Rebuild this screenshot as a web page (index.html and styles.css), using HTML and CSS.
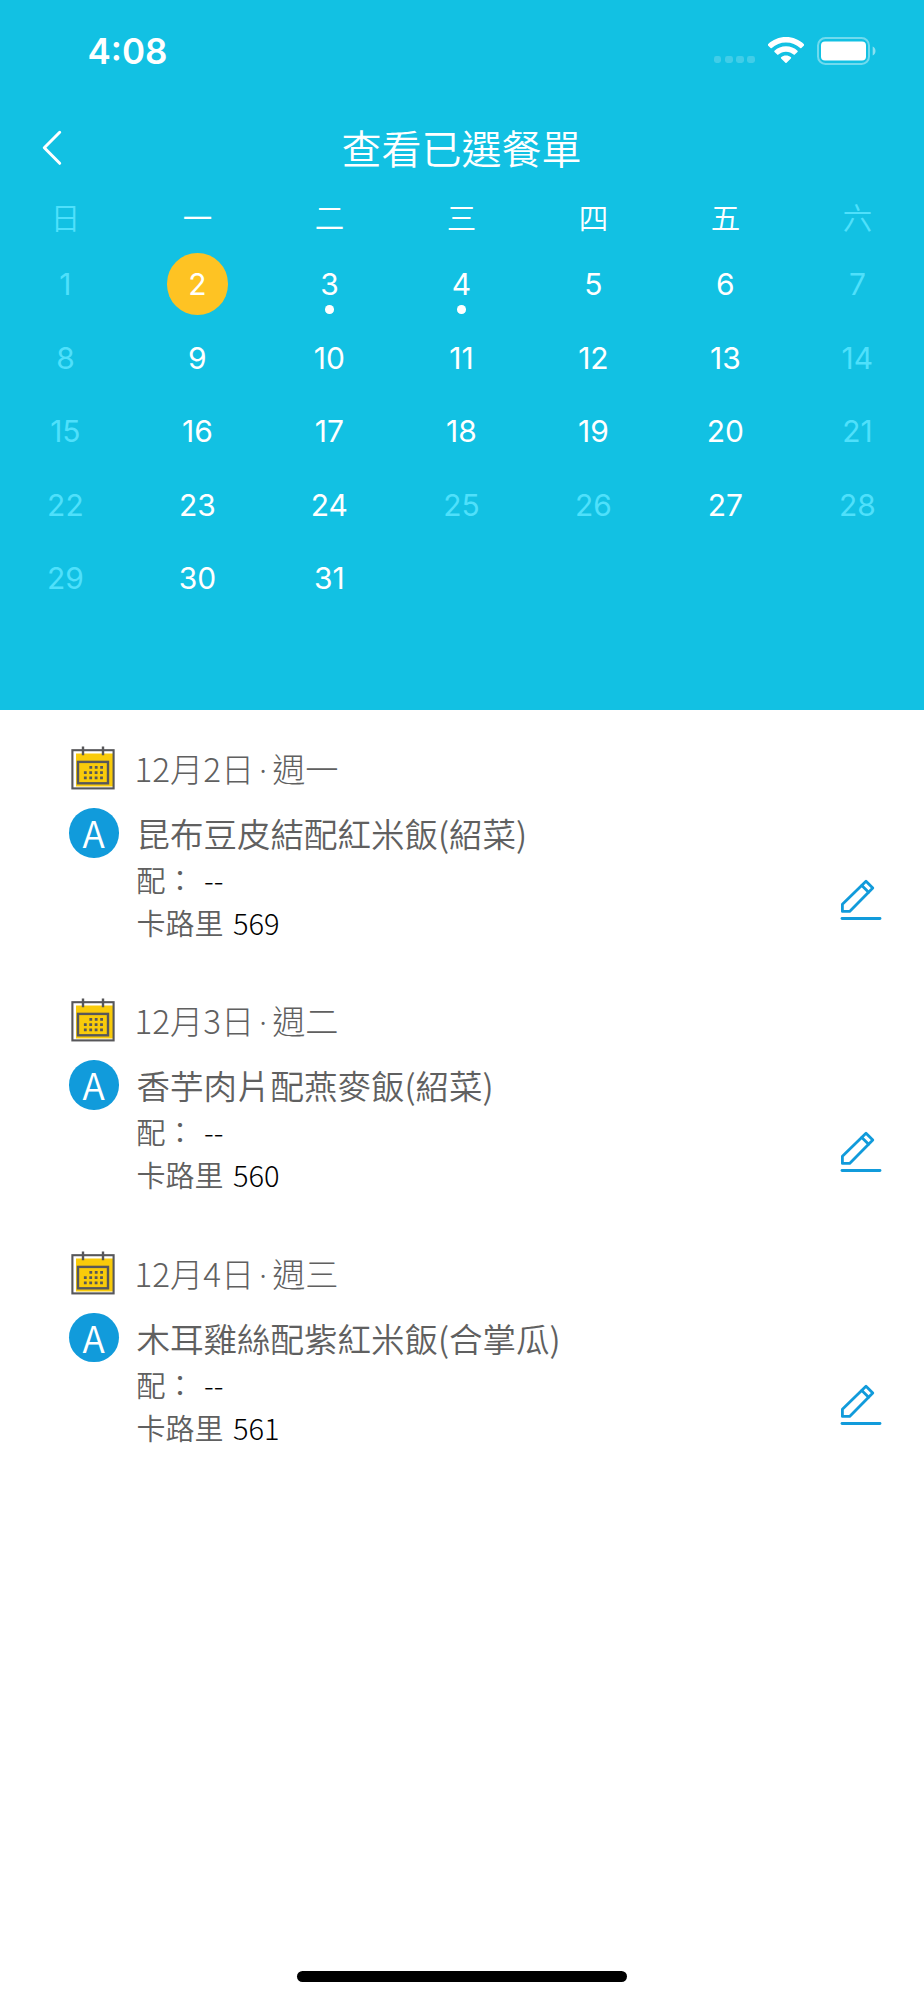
FILE: index.html
```html
<!DOCTYPE html>
<html lang="zh-Hant">
<head>
    <meta charset="UTF-8">
    <title>查看已選餐單</title>
    <link rel="stylesheet" href="styles.css">
</head>
<body>
    <!-- shared icons -->
    <svg class="icon-defs" width="0" height="0">
        <symbol id="icon-calendar" viewBox="0 0 44 44">
            <rect x="5" y="7.5" width="37" height="33" fill="#f9cb0a"/>
            <rect x="1.4" y="4.2" width="41.2" height="38.2" fill="none" stroke="#57575a" stroke-width="2.1"/>
            <path d="M12 0.4v8.8M32 0.4v8.8" stroke="#57575a" stroke-width="2.4"/>
            <rect x="7" y="15.9" width="30" height="21.4" fill="none" stroke="#57575a" stroke-width="2.4"/>
            <path d="M18.4 21.3h14M12.9 26.6h20M12.9 31.8h20" stroke="#57575a" stroke-width="2.8" stroke-dasharray="2.8 2.6"/>
        </symbol>
        <symbol id="icon-edit" viewBox="0 0 42 42">
            <g fill="none" stroke="#119bdb" stroke-width="2.8" stroke-linejoin="round" stroke-linecap="round">
                <path d="M2.4 32.4v-7.2L26 2.2l6.8 6.8L9.6 32.4z"/>
                <path d="M21.8 6.4l6.8 6.8"/>
                <path d="M2 39.5h38"/>
            </g>
        </symbol>
    </svg>

    <header class="header">
        <div class="status-bar">
            <span class="time">4:08</span>
            <div class="status-icons">
                <div class="signal"><i></i><i></i><i></i><i></i></div>
                <svg class="wifi" viewBox="0 0 36 27">
                    <path fill="#fff" d="M18 0C25 0 31.3 2.7 36 7.2c.4.4.4.8 0 1.2l-2.6 2.6c-.4.4-.8.4-1.2 0C28.4 7.5 23.5 5.5 18 5.5S7.6 7.5 3.8 11c-.4.4-.8.4-1.2 0L0 8.4C-.4 8-.4 7.6 0 7.2 4.7 2.7 11 0 18 0z"/>
                    <path fill="#fff" d="M18 9.2c4.5 0 8.5 1.7 11.5 4.5.4.4.4.8 0 1.2l-2.7 2.7c-.4.4-.8.4-1.2 0-2-1.8-4.7-2.9-7.6-2.9s-5.6 1.1-7.6 2.9c-.4.4-.8.4-1.2 0l-2.7-2.7c-.4-.4-.4-.8 0-1.2 3-2.8 7-4.5 11.5-4.5z"/>
                    <path fill="#fff" d="M18 18.6c1.9 0 3.6.6 4.9 1.7.4.4.4.8 0 1.2l-4.3 4.3c-.4.4-.8.4-1.2 0l-4.3-4.3c-.4-.4-.4-.8 0-1.2 1.3-1.1 3-1.7 4.9-1.7z"/>
                </svg>
                <svg class="battery" viewBox="0 0 60 28">
                    <rect x="1" y="1" width="51" height="26" rx="7.5" fill="none" stroke="#fff" stroke-opacity=".4" stroke-width="2"/>
                    <rect x="4" y="4.5" width="45" height="19" rx="4" fill="#fff"/>
                    <path d="M55.7 9.5c3.7 1.2 3.7 7.8 0 9z" fill="#fff" fill-opacity=".5"/>
                </svg>
            </div>
        </div>

        <div class="nav-bar">
            <a class="back-button" href="#">
                <svg viewBox="0 0 20 36"><path d="M17.7 2.3L2.3 17.8l15.4 15.5" fill="none" stroke="#fff" stroke-width="3" stroke-linecap="round" stroke-linejoin="round"/></svg>
            </a>
            <h1>查看已選餐單</h1>
        </div>

        <div class="week-names">
            <span class="off">日</span><span>一</span><span>二</span><span>三</span><span>四</span><span>五</span><span class="off">六</span>
        </div>
        <div class="days">
            <span class="off">1</span><span class="selected">2</span><span class="marked">3</span><span class="marked">4</span><span>5</span><span>6</span><span class="off">7</span>
            <span class="off">8</span><span>9</span><span>10</span><span>11</span><span>12</span><span>13</span><span class="off">14</span>
            <span class="off">15</span><span>16</span><span>17</span><span>18</span><span>19</span><span>20</span><span class="off">21</span>
            <span class="off">22</span><span>23</span><span>24</span><span class="off">25</span><span class="off">26</span><span>27</span><span class="off">28</span>
            <span class="off">29</span><span>30</span><span>31</span>
        </div>
    </header>

    <main class="meal-list">
        <section class="meal">
            <div class="meal-date">
                <svg class="calendar-icon"><use href="#icon-calendar"/></svg>
                <span>12月2日<i class="dot">·</i>週一</span>
            </div>
            <div class="meal-body">
                <div class="badge">A</div>
                <div class="meal-info">
                    <h2>昆布豆皮結配紅米飯(紹菜)</h2>
                    <p>配： <b>--</b></p>
                    <p>卡路里 <b>569</b></p>
                </div>
                <a class="edit-button" href="#"><svg><use href="#icon-edit"/></svg></a>
            </div>
        </section>

        <section class="meal">
            <div class="meal-date">
                <svg class="calendar-icon"><use href="#icon-calendar"/></svg>
                <span>12月3日<i class="dot">·</i>週二</span>
            </div>
            <div class="meal-body">
                <div class="badge">A</div>
                <div class="meal-info">
                    <h2>香芋肉片配燕麥飯(紹菜)</h2>
                    <p>配： <b>--</b></p>
                    <p>卡路里 <b>560</b></p>
                </div>
                <a class="edit-button" href="#"><svg><use href="#icon-edit"/></svg></a>
            </div>
        </section>

        <section class="meal">
            <div class="meal-date">
                <svg class="calendar-icon"><use href="#icon-calendar"/></svg>
                <span>12月4日<i class="dot">·</i>週三</span>
            </div>
            <div class="meal-body">
                <div class="badge">A</div>
                <div class="meal-info">
                    <h2>木耳雞絲配紫紅米飯(合掌瓜)</h2>
                    <p>配： <b>--</b></p>
                    <p>卡路里 <b>561</b></p>
                </div>
                <a class="edit-button" href="#"><svg><use href="#icon-edit"/></svg></a>
            </div>
        </section>
    </main>

    <div class="home-indicator"></div>
</body>
</html>
```
FILE: styles.css
```css
* {
    box-sizing: border-box;
}

body {
    margin: 0;
    height: 2000px;
    display: flex;
    flex-direction: column;
    background: #fff;
    font-family: "Noto Sans CJK TC", sans-serif;
    font-weight: 300;
    color: #606060;
}

svg {
    display: block;
}

.icon-defs {
    position: absolute;
}

/* Header */
.header {
    height: 710px;
    flex-shrink: 0;
    background: #12c1e3;
    color: #fff;
}

.status-bar {
    height: 102px;
    padding: 0 47px 0 87.5px;
    display: flex;
    justify-content: space-between;
    align-items: center;
}

.time {
    font-family: Inter, sans-serif;
    font-size: 35px;
    font-weight: 600;
    line-height: 42px;
}

.status-icons {
    display: flex;
    align-items: center;
}

.signal {
    display: flex;
    gap: 3.4px;
    margin: 17px 13px 0 0;
}

.signal i {
    width: 7.8px;
    height: 7.6px;
    border-radius: 2.4px;
    background: rgba(255, 255, 255, 0.2);
}

.wifi {
    width: 36px;
    height: 27px;
    margin: -1px 13px 0 0;
}

.battery {
    width: 60px;
    height: 28px;
    margin-top: -1px;
}

.nav-bar {
    height: 91px;
    padding: 0 42px;
    display: grid;
    grid-template-columns: 20px 1fr 20px;
    align-items: center;
}

.back-button svg {
    width: 20px;
    height: 36px;
}

.nav-bar h1 {
    margin: 0 1px 0 0;
    font-size: 40px;
    font-weight: 350;
    line-height: 58px;
    padding-bottom: 1px;
    text-align: center;
}

.week-names,
.days {
    margin-left: -0.6px;
    display: grid;
    grid-template-columns: repeat(7, 132px);
    justify-items: center;
}

.week-names {
    height: 54px;
    font-size: 29.5px;
    font-weight: 350;
    line-height: 46px;
}

.days {
    grid-auto-rows: 73.6px;
    align-items: center;
    font-family: Inter, sans-serif;
    font-size: 30px;
    font-weight: 380;
}

.days span {
    position: relative;
    width: 61.5px;
    height: 61.5px;
    line-height: 62px;
    border-radius: 50%;
    text-align: center;
}

.days .selected {
    background: #fec323;
}

.days .marked::after {
    content: "";
    position: absolute;
    left: 26.5px;
    bottom: 1px;
    width: 8.6px;
    height: 8.6px;
    border-radius: 50%;
    background: #fff;
}

.header .off {
    color: #4fe0fb;
}

/* Meals */
.meal-list {
    flex-grow: 1;
    padding: 36px 42px 0 69px;
}

.meal {
    height: 252.3px;
}

.meal-date {
    height: 48px;
    padding-left: 2px;
    display: flex;
    gap: 19.5px;
    font-size: 33.2px;
    line-height: 43px;
}

.meal-date .dot {
    display: inline-block;
    width: 18px;
    font-family: "Noto Sans", sans-serif;
    font-style: normal;
    line-height: 30px;
    text-align: center;
}

.calendar-icon {
    width: 44px;
    height: 44px;
}

.meal-body {
    display: flex;
    align-items: flex-start;
}

.badge {
    width: 49.5px;
    height: 49.5px;
    margin: 14px 18px 0 0;
    border-radius: 50%;
    background: #119bdb;
    color: #fff;
    font-size: 37px;
    font-weight: 350;
    line-height: 48px;
    text-align: center;
}

.meal-info {
    flex-grow: 1;
}

.meal-info h2 {
    margin: 14px 0 1px;
    font-size: 33.5px;
    font-weight: 350;
    line-height: 49px;
}

.meal-info p {
    margin: 0;
    font-size: 29px;
    font-weight: 350;
    line-height: 43px;
}

.meal-info b {
    margin-left: 3px;
    font-weight: 300;
    color: #000;
}

.edit-button {
    margin-top: 85px;
}

.edit-button svg {
    width: 42px;
    height: 42px;
}

.home-indicator {
    width: 330px;
    height: 11px;
    margin: 0 auto 18px;
    border-radius: 6px;
    background: #000;
}
```
